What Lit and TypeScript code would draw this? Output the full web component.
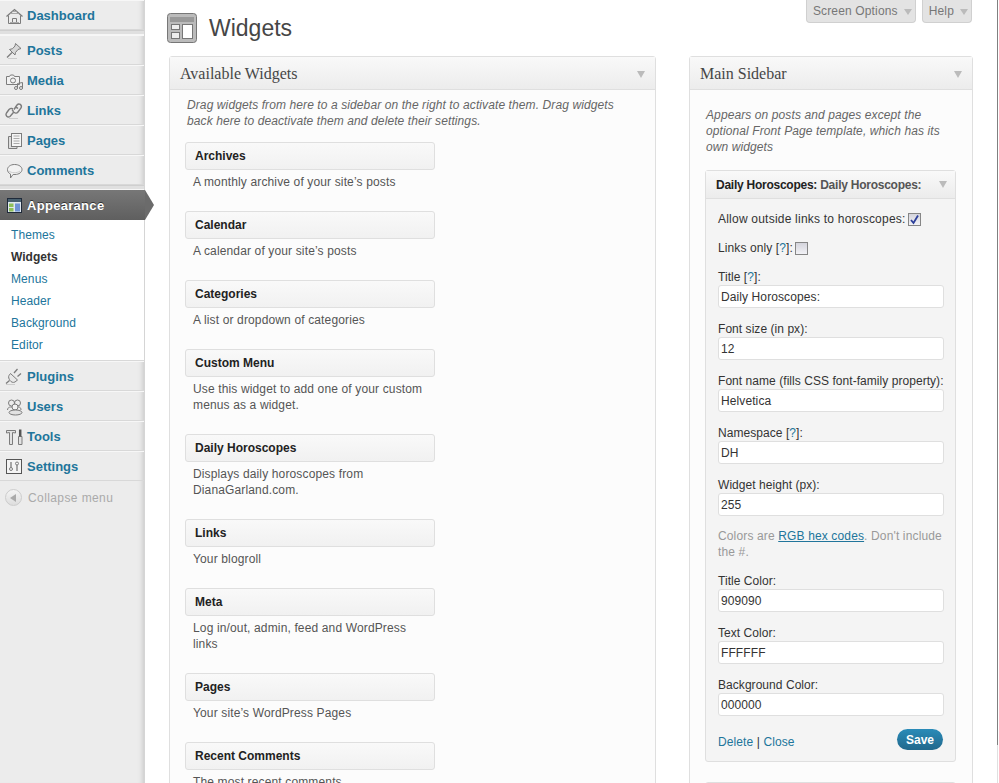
import { LitElement, html, css, svg } from "lit";
import { customElement } from "lit/decorators.js";

const ic = (c: unknown) => html`<svg class="ic" viewBox="0 0 20 20" fill="none" stroke="#7c7c7c" stroke-width="1">${c}</svg>`;
const icons: Record<string, unknown> = {
  Dashboard: ic(svg`<path d="M1.500 10.500 9.500 3.500l8 7" stroke-width="1.300"/><path d="M3.500 9.500v8h12v-8M7.500 17.500v-5h4v5" /><path d="M5.500 7.500h8M7.500 5.500h4M5 16.500h9" stroke="#aaa"/>`),
  Posts: ic(svg`<path d="M10.500 2.500l5.500 5-3 1-2.500 3-.5 2.500-5.500-5.500 3-.8 2.500-2.700z" fill="#d8d8d8"/><path d="M7 11.500l-5 5" stroke-width="1.200"/><path d="M3 17.500h9" stroke="#ccc"/>`),
  Media: ic(svg`<path d="M1.500 5.500h3l1-1.500h3l1 1.500h5v8h-13z" fill="#f1f1f1"/><circle cx="8" cy="9.500" r="2.500"/><path d="M12.500 12.500v5M17.500 11.500v6M12.500 12.500l5-1"/><circle cx="11" cy="17" r="1.500"/><circle cx="16" cy="17" r="1.500"/>`),
  Links: ic(svg`<path d="M9 8.500l3-4.500c2-2.500 5.500 0 4 3l-3 4c-1.500 2-3.500 1-4 0M10 7c1-1 2-.5 3 .5" stroke-width="1.400"/><path d="M8 8c-1-1-3-.5-4 .5L1.500 12c-1.500 2.500 1 5 3.500 3.500l3-3.500c1-1.500 0-2.500-1-3.500" stroke-width="1.400"/><path d="M4 17.500h9" stroke="#ccc"/>`),
  Pages: ic(svg`<path d="M6.500 5.500h-3v12H12v-2" fill="#ddd"/><rect x="6.500" y="2.500" width="10" height="13" fill="#f5f5f5"/><path d="M8.500 5h6M8.500 7.500h6M8.500 10h6M8.500 12.500h6" stroke="#aaa"/>`),
  Comments: ic(svg`<path d="M9.500 3.500c4.500 0 7.500 2.300 7.500 5s-3 5-7 5c-.8 0-1.500 0-2 0l-2.500 3.500v-4c-2-.9-3-2.500-3-4.500 0-2.700 3-5 7-5z" fill="#f2f2f2"/><path d="M4 10c2 2 8 2.500 11 0" stroke="#ccc"/>`),
  Plugins: ic(svg`<path d="M5.500 6.500l7 6.500-2.500 2c-2 1-4 0-5-1.500S3 10 4 8.500z" fill="#e8e8e8"/><path d="M9 6l3.500-4M12.500 9.500l3.500-3M4.500 13.500L1 16.500" stroke-width="1.300"/><path d="M1 17.500h9" stroke="#ccc"/>`),
  Users: ic(svg`<circle cx="6.500" cy="6" r="3"/><circle cx="12.500" cy="6" r="3"/><path d="M2.500 13c0-2 1.500-3 3-3h8c1.500 0 2.500 1 2.500 3"/><circle cx="10" cy="10" r="3" fill="#f3f3f3"/><ellipse cx="10.500" cy="15.500" rx="6.500" ry="2.500" fill="#e2e2e2"/>`),
  Tools: ic(svg`<path d="M1.500 3.500h9v2.500l-3-.500v12h-3v-12l-3 .500z" fill="#e2e2e2"/><path d="M13.500 9.500h3.500v8h-3.500z" fill="#e2e2e2"/><path d="M15.200 2.500v7" stroke-width="2.500" stroke="#555"/>`),
  Settings: ic(svg`<rect x="1.500" y="2.500" width="15" height="14" stroke="#555" fill="#f4f4f4"/><circle cx="6" cy="12" r="1.500"/><circle cx="12" cy="6.500" r="1.500"/><path d="M6 5v5.500M12 8v6" stroke-width="1.300"/>`),
};

interface W { t: string; d: string }
const widgets: W[] = [
  { t: "Archives", d: "A monthly archive of your site’s posts" },
  { t: "Calendar", d: "A calendar of your site’s posts" },
  { t: "Categories", d: "A list or dropdown of categories" },
  { t: "Custom Menu", d: "Use this widget to add one of your custom menus as a widget." },
  { t: "Daily Horoscopes", d: "Displays daily horoscopes from DianaGarland.com." },
  { t: "Links", d: "Your blogroll" },
  { t: "Meta", d: "Log in/out, admin, feed and WordPress links" },
  { t: "Pages", d: "Your site’s WordPress Pages" },
  { t: "Recent Comments", d: "The most recent comments" },
];
const tri = html`<span class="tri"></span>`;
const help = html`[<span class="q">?</span>]`;

@customElement("app-root")
export class AppRoot extends LitElement {
  static styles = css`
    :host { display: block; height: 783px; width: 999px; overflow: hidden; background: #fff; font: 12px/16px "Liberation Sans", Arial, sans-serif; letter-spacing: .1px; color: #333; position: relative; }
    * { box-sizing: border-box; }
    .page { display: flex; height: 783px; }
    .side { width: 145px; flex: none; height: 783px; background: #ececec; border-right: 1px solid #d5d5d5; box-shadow: inset -6px 0 6px -6px rgba(0,0,0,.22); display: flex; flex-direction: column; }
    .item { height: 30px; display: flex; align-items: center; gap: 2px; padding: 1px 0 0 5px; font-size: 13px; letter-spacing: 0; font-weight: 700; color: #21759b; border-bottom: 1px solid #d8d8d8; border-top: 1px solid #f7f7f7; }
    .ic { width: 20px; height: 20px; flex: none; }
    .sep { height: 5px; background: #e0e0e0; border-top: 1px solid #cfcfcf; border-bottom: 1px solid #f6f6f6; }
    .active { position: relative; background: linear-gradient(#777, #5f5f5f); color: #fff; border: 0; width: 145px; letter-spacing: .3px; text-shadow: 0 -1px 0 #333; }
    .active::after { content: ""; position: absolute; left: 145px; top: 0; width: 0; height: 0; border-left: 9px solid #6b6b6b; border-top: 15px solid transparent; border-bottom: 15px solid transparent; }
    .subs { background: #fff; height: 141px; padding: 4px 0 0 11px; border-bottom: 1px solid #d8d8d8; width: 144px; }
    .subs div { height: 22px; line-height: 22px; color: #21759b; }
    .subs .cur { color: #333; font-weight: 700; letter-spacing: 0; }
    .collapse { display: flex; align-items: center; gap: 6px; padding: 8px 0 0 5px; color: #aaa; font-size: 12px; letter-spacing: .4px; }
    .cbtn { width: 17px; height: 17px; border-radius: 50%; background: linear-gradient(#f4f4f4, #ddd); border: 1px solid #ccc; display: flex; align-items: center; justify-content: center; }
    .cbtn i { border-right: 6px solid #aaa; border-top: 4px solid transparent; border-bottom: 4px solid transparent; margin-right: 2px; }
    .main { flex: 1; min-width: 0; padding: 0 25px 0 24px; background: #fff; }
    .head { height: 56px; display: flex; justify-content: space-between; align-items: flex-start; margin: 0 2px 0 -2px; }
    .ttl { display: flex; align-items: center; gap: 12px; padding-top: 13px; font-size: 23px; letter-spacing: 0; line-height: 30px; color: #464646; }
    .tabs { display: flex; gap: 6px; }
    .tab { height: 23px; padding: 0 3px 0 6px; display: flex; align-items: center; gap: 6px; background: #e3e3e3; border: 1px solid #d0d0d0; border-top: 0; border-radius: 0 0 4px 4px; color: #777; letter-spacing: .15px; }
    .tab i { border-top: 6px solid #bbb; border-left: 4px solid transparent; border-right: 4px solid transparent; margin-top: 2px; }
    .cols { display: flex; gap: 33px; align-items: flex-start; }
    .panel { background: #fcfcfc; border: 1px solid #dfdfdf; border-radius: 3px 3px 0 0; }
    .p-l { width: 487px; height: 760px; flex: none; }
    .p-r { width: 284px; height: 760px; flex: none; }
    .ph { height: 33px; display: flex; justify-content: space-between; align-items: center; padding: 2px 10px 0; background: linear-gradient(#f9f9f9, #ececec); border-bottom: 1px solid #dfdfdf; font: 16px "Liberation Serif", serif; letter-spacing: 0; color: #464646; }
    .tri { border-top: 7px solid #bbb; border-left: 4px solid transparent; border-right: 4px solid transparent; }
    .intro { font-style: italic; color: #666; padding: 7px 17px 0; width: 470px; height: 52px; }
    .list { padding-left: 15px; }
    .w { width: 250px; }
    .wt { height: 28px; padding-left: 9px; display: flex; align-items: center; font-weight: 700; letter-spacing: 0; color: #222; background: linear-gradient(#f9f9f9, #f1f1f1); border: 1px solid #dfdfdf; border-radius: 3px; }
    .wd { padding: 4px 8px 21px; color: #555; letter-spacing: .14px; }
    .side-intro { font-style: italic; color: #666; padding: 17px 15px 0 16px; height: 80px; }
    .box { margin-left: 15px; width: 251px; background: #f4f4f4; border: 1px solid #dfdfdf; border-radius: 3px; height: 592px; }
    .bh { height: 28px; display: flex; justify-content: space-between; align-items: center; padding: 0 10px; background: linear-gradient(#f9f9f9, #ececec); border-bottom: 1px solid #dfdfdf; font-weight: 700; letter-spacing: -.25px; color: #222; }
    .bh .tri { margin-right: -2px; }
    .bh span span { color: #555; }
    .form { padding: 12px 12px 0; }
    .chk { display: flex; align-items: center; gap: 2px; height: 16px; margin-bottom: 13px; }
    .allow { letter-spacing: .22px; }
    .cb { width: 13px; height: 13px; border: 1px solid #868686; background: linear-gradient(#d4d4dc, #f2f2f6); display: flex; align-items: center; justify-content: center; }
    .cb svg { width: 11px; height: 11px; }
    .q { color: #21759b; }
    label { display: block; height: 16px; margin-top: 13px; white-space: nowrap; letter-spacing: .05px; }
    .chk + label { margin-top: 0; }
    input { display: block; width: 226px; height: 23px; border: 1px solid #dfdfdf; border-radius: 3px; background: #fff; padding: 0 2px; font: 12px "Liberation Sans", Arial, sans-serif; letter-spacing: .1px; color: #333; outline: none; }
    .note { color: #999; margin-top: 12px; height: 32px; letter-spacing: .14px; }
    .note u { color: #21759b; }
    .foot { display: flex; justify-content: space-between; align-items: flex-start; margin-top: 13px; }
    .foot a { color: #21759b; }
    .links { padding-top: 5px; }
    .save { width: 46px; height: 21px; border-radius: 11px; background: linear-gradient(#2a8bb8, #21688c); color: #fff; font-weight: 700; letter-spacing: 0; display: flex; align-items: center; justify-content: center; }
    .box2 { margin: 20px 0 0 15px; width: 251px; border: 1px solid #dfdfdf; height: 30px; border-radius: 3px; }
    .edge { position: absolute; left: 997px; top: 0; width: 1px; height: 783px; background: linear-gradient(#808080 745px, #e0e0e0 745px); }
  `;

  item(n: string) {
    return html`<div class="item">${icons[n]}<span>${n}</span></div>`;
  }
  field(l: unknown, v: string) {
    return html`<label>${l}</label><input .value=${v} />`;
  }
  render() {
    return html`<div class="page">
      <nav class="side">
        ${this.item("Dashboard")}
        <div class="sep"></div>
        ${["Posts", "Media", "Links", "Pages", "Comments"].map((n) => this.item(n))}
        <div class="sep"></div>
        <div class="item active">
          <svg class="ic" viewBox="0 0 20 20"><rect x="2.500" y="2.500" width="14" height="14" fill="#dfe7ef" stroke="#1f2a3a"/><rect x="3" y="3" width="13" height="3" fill="#48606f"/><rect x="4" y="7.500" width="4.500" height="3.500" fill="#8fc05a"/><rect x="4" y="12" width="4.500" height="3.500" fill="#8fc05a"/><rect x="10" y="7.500" width="5" height="8" fill="#6f93d6"/></svg>
          <span>Appearance</span>
        </div>
        <div class="subs">
          <div>Themes</div><div class="cur">Widgets</div><div>Menus</div><div>Header</div><div>Background</div><div>Editor</div>
        </div>
        ${["Plugins", "Users", "Tools", "Settings"].map((n) => this.item(n))}
        <div class="collapse"><span class="cbtn"><i></i></span>Collapse menu</div>
      </nav>
      <main class="main">
        <div class="head">
          <div class="ttl">
            <svg width="30" height="30" viewBox="0 0 30 30"><rect x=".5" y=".5" width="29" height="29" rx="3" fill="#bbb" stroke="#777"/><rect x="3" y="4" width="24" height="5" fill="#999"/><rect x="4.500" y="11.500" width="8" height="5" fill="#eee" stroke="#777"/><rect x="4.500" y="19.500" width="8" height="6" fill="#eee" stroke="#777"/><rect x="15.500" y="11.500" width="10" height="14" fill="#fff" stroke="#777"/></svg>
            <span>Widgets</span>
          </div>
          <div class="tabs">
            <div class="tab">Screen Options <i></i></div>
            <div class="tab">Help <i></i></div>
          </div>
        </div>
        <div class="cols">
          <section class="panel p-l">
            <div class="ph"><span>Available Widgets</span>${tri}</div>
            <div class="intro">Drag widgets from here to a sidebar on the right to activate them. Drag widgets back here to deactivate them and delete their settings.</div>
            <div class="list">
              ${widgets.map((w) => html`<div class="w"><div class="wt">${w.t}</div><div class="wd">${w.d}</div></div>`)}
            </div>
          </section>
          <section class="panel p-r">
            <div class="ph"><span>Main Sidebar</span>${tri}</div>
            <div class="side-intro">Appears on posts and pages except the optional Front Page template, which has its own widgets</div>
            <div class="box">
              <div class="bh"><span>Daily Horoscopes: <span>Daily Horoscopes:</span></span>${tri}</div>
              <div class="form">
                <div class="chk allow"><span>Allow outside links to horoscopes:</span><span class="cb"><svg viewBox="0 0 11 11"><path d="M2 6l2.500 3L9 1.500" fill="none" stroke="#2c3f9a" stroke-width="1.800"/></svg></span></div>
                <div class="chk"><span>Links only ${help}:</span><span class="cb"></span></div>
                ${this.field(html`Title ${help}:`, "Daily Horoscopes:")}
                ${this.field("Font size (in px):", "12")}
                ${this.field("Font name (fills CSS font-family property):", "Helvetica")}
                ${this.field(html`Namespace ${help}:`, "DH")}
                ${this.field("Widget height (px):", "255")}
                <div class="note">Colors are <u>RGB hex codes</u>. Don't include the #.</div>
                ${this.field("Title Color:", "909090")}
                ${this.field("Text Color:", "FFFFFF")}
                ${this.field("Background Color:", "000000")}
                <div class="foot"><span class="links"><a>Delete</a> | <a>Close</a></span><span class="save">Save</span></div>
              </div>
            </div>
            <div class="box2"></div>
          </section>
        </div>
      </main>
    </div>
    <div class="edge"></div>`;
  }
}
